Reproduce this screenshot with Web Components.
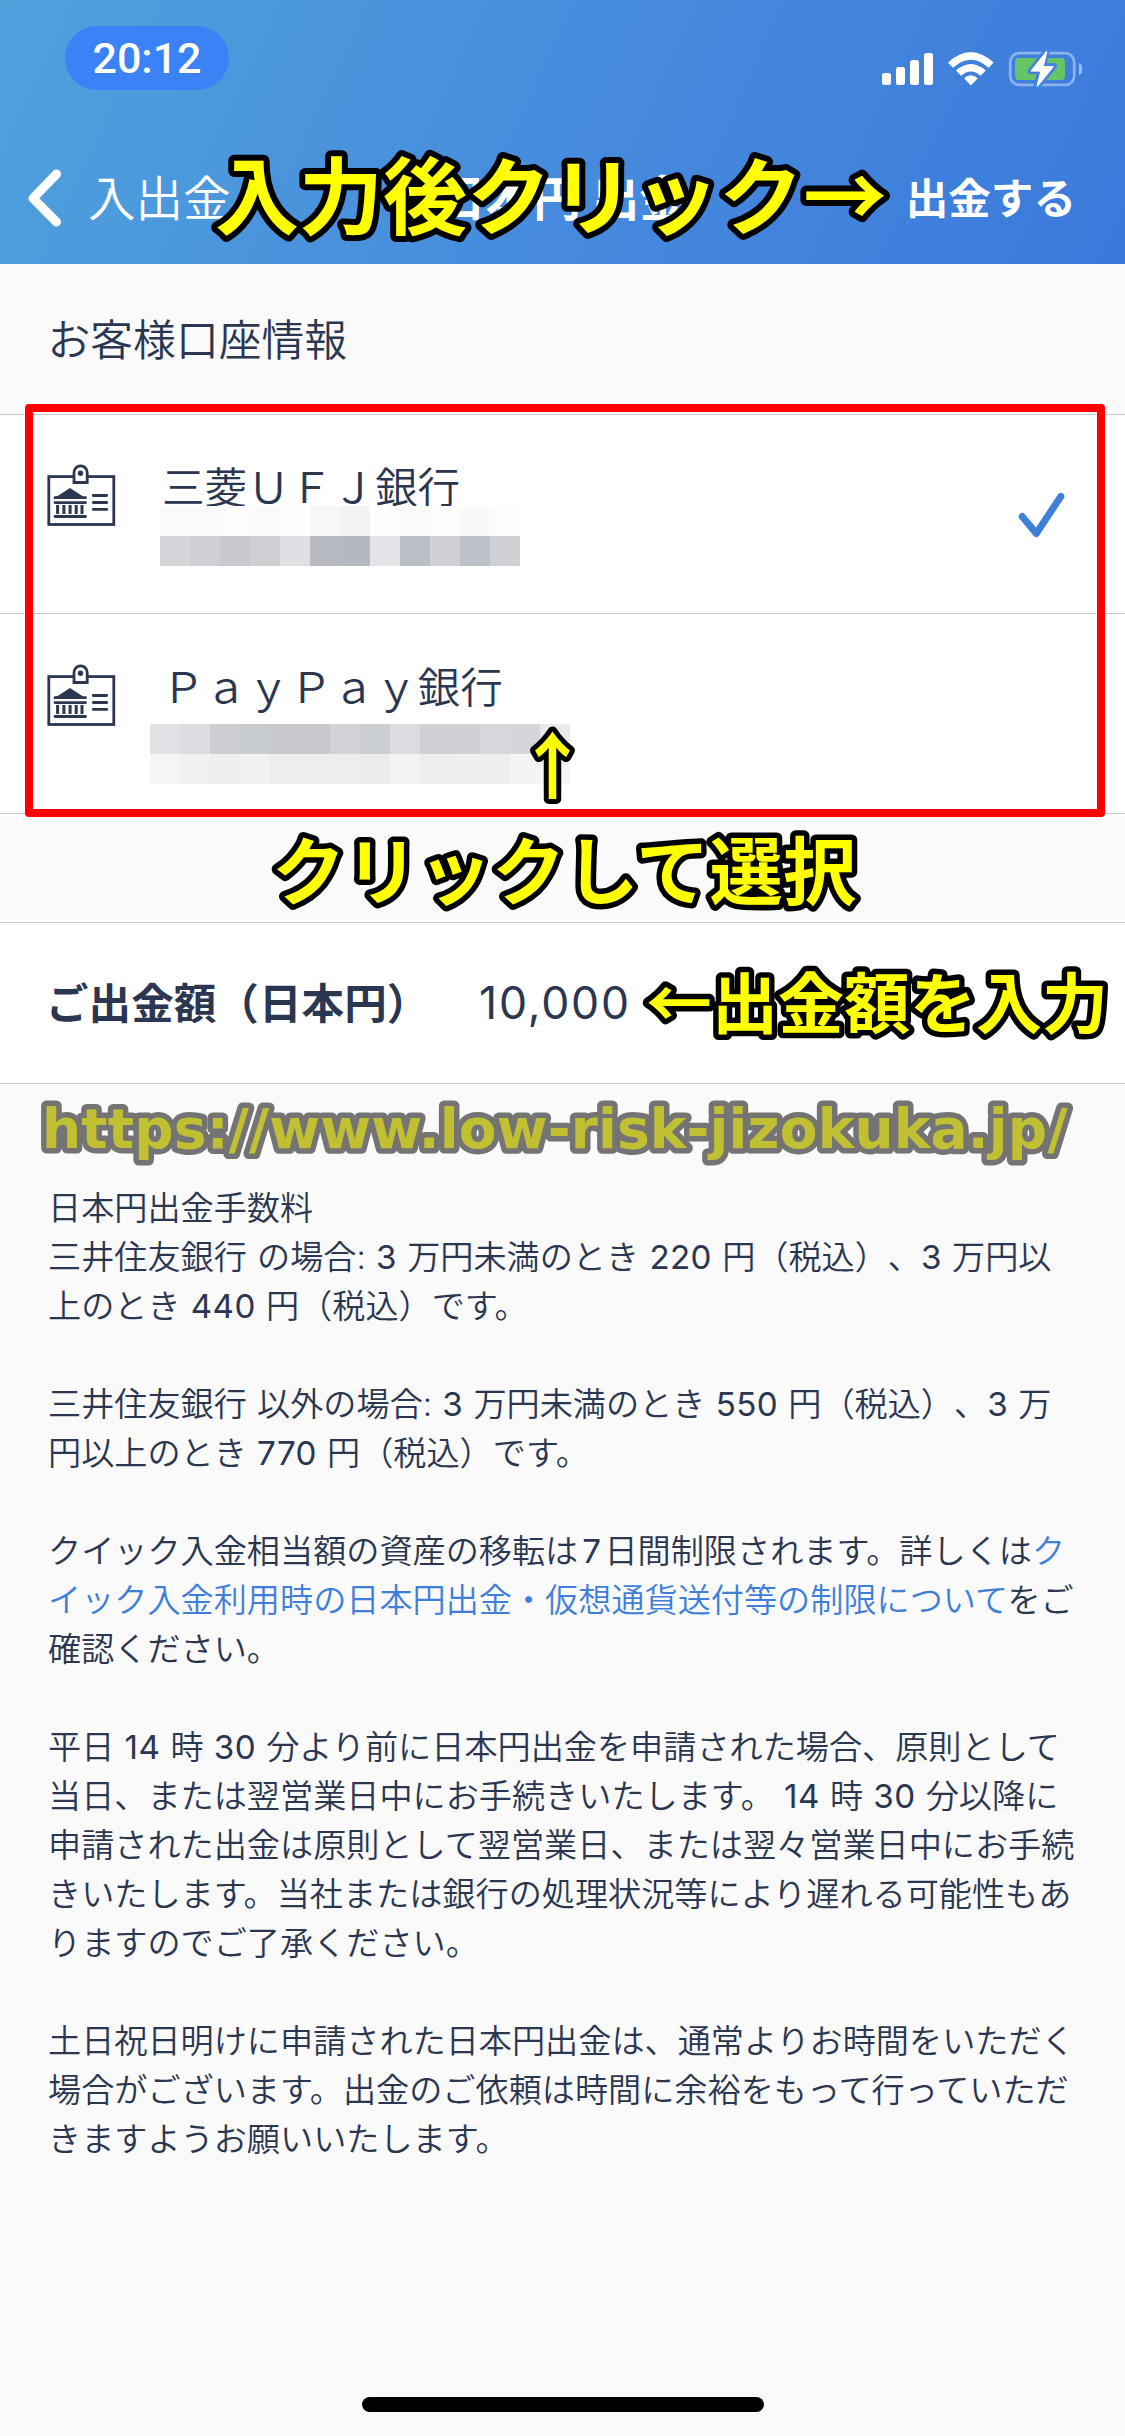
<!DOCTYPE html>
<html lang="ja">
<head>
<meta charset="utf-8">
<title>日本円 出金</title>
<style>
  html, body { margin: 0; padding: 0; }
  body { width: 1125px; height: 2436px; overflow: hidden; background: #fafafa; }
</style>
</head>
<body>
<withdraw-screen></withdraw-screen>
<script>
const define = (name, html) => {
  const t = document.createElement('template');
  t.innerHTML = html;
  customElements.define(name, class extends HTMLElement {
    constructor() {
      super();
      this.attachShadow({ mode: 'open' }).appendChild(t.content.cloneNode(true));
    }
  });
};

// Two-row strip of coloured cells that hides an account number
customElements.define('pixel-mask', class extends HTMLElement {
  connectedCallback() {
    const rows = this.getAttribute('rows').split('|').map(r => r.trim().split(/\s+/));
    const root = this.attachShadow({ mode: 'open' });
    root.innerHTML = `<style>:host{display:grid;grid-template-columns:repeat(${rows[0].length},30px);grid-auto-rows:30px}</style>` +
      rows.flat().map(c => `<i style="background:#${c}"></i>`).join('');
  }
});

// Outlined annotation text with rounded outline corners
customElements.define('callout-text', class extends HTMLElement {
  connectedCallback() {
    const root = this.attachShadow({ mode: 'open' });
    root.innerHTML = `<style>
      :host { display: block; position: absolute; height: 1em; line-height: 1; font-weight: 700; }
      svg { display: block; overflow: visible; width: 1px; height: 1em; }
      text { fill: var(--fill, #ff0); stroke: var(--edge, #000); stroke-width: var(--edge-width, 11px); stroke-linejoin: round; paint-order: stroke fill; white-space: pre; }
    </style><svg><text x="0" y="0.88em"></text></svg>`;
    root.querySelector('text').textContent = this.getAttribute('label');
  }
});

define('status-bar', `
<style>
  :host { display: flex; justify-content: space-between; height: 132px; box-sizing: border-box; padding: 26px 43px 0 65px; }
  .time { width: 164px; height: 64px; border-radius: 32px; background: #3b82f6; color: #fff;
    display: flex; align-items: center; justify-content: center; font: 500 43px/64px Roboto, sans-serif; }
  svg { display: block; margin-top: 22px; }
</style>
<div class="time">20:12</div>
<svg width="202" height="44" viewBox="880 48 202 44">
  <g fill="#fff">
    <rect x="882" y="73" width="9" height="12" rx="2.5"/><rect x="896" y="67" width="9" height="18" rx="2.5"/>
    <rect x="910" y="60" width="9" height="25" rx="2.5"/><rect x="924" y="53" width="9" height="32" rx="2.5"/>
    <path d="M948 62.5Q970.8 41.5 993.6 62.5L988.6 67.8Q970.8 51.5 953 67.8Z"/>
    <path d="M956 70.5Q970.8 57.5 985.8 70.5L980.6 75.8Q970.8 67 961 75.8Z"/>
    <path d="M964 78.3Q970.8 72.2 977.8 78.3L970.8 85.5Z"/>
  </g>
  <path d="M1079 63q3.6 1.5 3.6 6t-3.6 6z" fill="#9dbdee"/>
  <rect x="1010.2" y="53.2" width="64" height="31.6" rx="9" fill="none" stroke="#8bb2ec" stroke-width="2.8"/>
  <rect x="1015" y="58" width="50" height="22" rx="4" fill="#65c466"/>
  <path d="M1046.5 51L1030.6 71.3H1040.5L1036.5 87L1054 66.3H1043.5Z" fill="#fff" stroke="#4483dd" stroke-width="6" stroke-linejoin="round" paint-order="stroke"/>
  <path d="M1046.5 52.2L1031.8 70.6H1041.3L1037.5 85.6L1052.6 67H1042.8Z" fill="#fff" stroke="#fff" stroke-width="1.6" stroke-linejoin="round"/>
</svg>`);

define('nav-bar', `
<style>
  :host { display: grid; grid-template-columns: 1fr auto 1fr; align-items: center; height: 132px; color: #fff; white-space: nowrap; }
  .back { display: flex; align-items: center; gap: 25px; padding-left: 27px; font-size: 47.5px; font-weight: 350; line-height: 60px; }
  .back span { padding-bottom: 4px; }
  .title { font-size: 47.5px; font-weight: 600; line-height: 60px; padding-bottom: 4px; }
  .act { justify-self: end; padding: 0 49px 4px 0; font-size: 42.6px; font-weight: 600; line-height: 60px; }
  svg { display: block; }
</style>
<div class="back"><svg width="36" height="60" viewBox="0 0 36 60"><path d="M29.5 6L6 30.3L29.5 54" fill="none" stroke="#fff" stroke-width="9" stroke-linecap="round" stroke-linejoin="round"/></svg><span><slot name="back"></slot></span></div>
<div class="title"><slot></slot></div>
<div class="act"><slot name="action"></slot></div>`);

define('bank-icon', `
<style>:host { display: block; width: 72px; height: 66px; } svg { display: block; }</style>
<svg width="72" height="66" viewBox="45 462 72 66" fill="none" stroke="#2b3650" stroke-width="2.8">
  <rect x="48.8" y="476.6" width="65" height="47.9"/>
  <path d="M74 482.5V472.4a6.6 6.6 0 0 1 13.2 0V482.5Z" fill="#fff"/>
  <circle cx="80.5" cy="473.2" r="2.7" fill="#2b3650" stroke="none"/>
  <path d="M53 499L70 488L87 499Z" fill="#2b3650" stroke="none"/>
  <path d="M55 497.6H85.5M55 502.6H85.5M55 516.5H85.5" stroke-width="2.8" stroke-linecap="round"/>
  <path d="M57.6 505V514M63.9 505V514M70.1 505V514M76.2 505V514M82 505V514" stroke-width="3"/>
  <path d="M93.3 495.5H106.7M93.3 502.5H106.7M93.3 509.4H106.7" stroke-linecap="round" stroke-width="2.8"/>
</svg>`);

define('bank-row', `
<style>
  :host { display: flex; align-items: flex-start; box-sizing: border-box; height: 199px; padding: 47px 58px 0 45px; background: #fff; border-bottom: 1px solid #c8c7cc; }
  :host(:nth-of-type(2)) { height: 200px; padding-top: 48px; }
  .info { flex: 1; padding-left: 45px; }
  .name { height: 45px; font-size: 42.6px; line-height: 45px; font-weight: 350; }
  slot[name=mark]::slotted(*) { margin-top: 28px; }
</style>
<bank-icon></bank-icon>
<div class="info"><div class="name"><slot></slot></div><slot name="mask"></slot></div>
<slot name="mark"></slot>`);

define('check-mark', `
<style>:host { display: block; } svg { display: block; }</style>
<svg width="50" height="50" viewBox="1017 490 50 50"><path d="M1022.2 516.5L1036.3 533.5L1060.8 496.5" fill="none" stroke="#3f7fd9" stroke-width="7" stroke-linecap="round" stroke-linejoin="round"/></svg>`);

define('section-title', `
<style>:host { display: flex; align-items: center; box-sizing: border-box; height: 151px; padding: 0 0 4px 47.5px; font-size: 42.8px; font-weight: 350; border-bottom: 1px solid #c8c7cc; }</style>
<slot></slot>`);

define('amount-row', `
<style>
  :host { display: flex; align-items: center; box-sizing: border-box; height: 162px; margin-top: 108px; padding-left: 46px; background: #fff; border: solid #c8c7cc; border-width: 1px 0; white-space: nowrap; }
  .label { width: 433px; padding-bottom: 4px; font-size: 42.6px; font-weight: 700; line-height: 60px; text-spacing-trim: space-all; }
  .value { font: 400 44.5px/60px Inter, sans-serif; letter-spacing: 1.8px; padding-bottom: 1px; }
</style>
<div class="label"><slot></slot></div><div class="value"><slot name="value"></slot></div>`);

define('fee-notes', `
<style>
  :host { display: block; padding: 100px 0 0 48px; font-family: Inter, "Noto Sans CJK JP", sans-serif; font-size: 33.15px; line-height: 49px; font-weight: 350; white-space: nowrap; text-spacing-trim: space-all; word-spacing: .9px; }
  p { margin: 0 0 49px; }
  b { font-weight: 400; letter-spacing: .4px; }
  b.day { margin: 0 3px 0 4px; }
  a { color: #3f7fd9; }
</style>
<p>日本円出金手数料<br>三井住友銀行 の場合: <b>3</b> 万円未満のとき <b>220</b> 円（税込）、<b>3</b> 万円以<br>上のとき <b>440</b> 円（税込）です。</p>
<p>三井住友銀行 以外の場合: <b>3</b> 万円未満のとき <b>550</b> 円（税込）、<b>3</b> 万<br>円以上のとき <b>770</b> 円（税込）です。</p>
<p>クイック入金相当額の資産の移転は<b class="day">7</b>日間制限されます。詳しくは<a>ク<br>イック入金利用時の日本円出金・仮想通貨送付等の制限について</a>をご<br>確認ください。</p>
<p>平日 <b>14</b> 時 <b>30</b> 分より前に日本円出金を申請された場合、原則として<br>当日、または翌営業日中にお手続きいたします。 <b>14</b> 時 <b>30</b> 分以降に<br>申請された出金は原則として翌営業日、または翌々営業日中にお手続<br>きいたします。当社または銀行の処理状況等により遅れる可能性もあ<br>りますのでご了承ください。</p>
<p>土日祝日明けに申請された日本円出金は、通常よりお時間をいただく<br>場合がございます。出金のご依頼は時間に余裕をもって行っていただ<br>きますようお願いいたします。</p>`);

define('withdraw-screen', `
<style>
  :host { display: flex; flex-direction: column; position: relative; width: 1125px; height: 2436px; overflow: hidden; background: #fafafa; color: #2b3650; font-family: "Noto Sans CJK JP", sans-serif; }
  header { background: linear-gradient(115deg, #50a1dc 0%, #468bdd 52%, #3b79dc 100%); height: 264px; }
  .frame { position: absolute; left: 24.5px; top: 404px; width: 1080px; height: 412.5px; box-sizing: border-box; border: 8px solid #f00; border-radius: 4px; }
  .c1 { left: 215px; top: 154px; font-size: 84px; --edge-width: 12px; }
  .c2 { left: 272px; top: 834px; font-size: 73.3px; }
  .c3 { left: 646px; top: 970px; font-size: 66px; }
  .c4 { left: 516px; top: 729px; font-size: 73px; --edge-width: 10px; }
  .url { left: 41.5px; top: 1100px; font-family: "DejaVu Sans", sans-serif; font-size: 55px; letter-spacing: .16px; --fill: #c1c032; --edge: #747474; }
  .home { align-self: center; margin-top: auto; margin-bottom: 24px; width: 402px; height: 15px; border-radius: 8px; background: #000; }
</style>
<header>
  <status-bar></status-bar>
  <nav-bar><span slot="back">入出金</span>日本円 出金<span slot="action">出金する</span></nav-bar>
</header>
<section-title>お客様口座情報</section-title>
<bank-row>三菱ＵＦＪ銀行
  <pixel-mask slot="mask" style="margin-left:-2px;margin-top:-1px" rows="fafafb fafafb fcfcfd fafafb fdfefe f6f7f7 f3f3f4 fdfdfd fafafa fcfcfd f8faf9 fcfcfc|d5d6da cfd0d5 c8c9ce cdcfd3 dfe0e4 b7bac3 b4b8c1 e3e4e8 babec7 cfd0d5 bcc0c9 d0d1d6"></pixel-mask>
  <check-mark slot="mark"></check-mark>
</bank-row>
<bank-row>ＰａｙＰａｙ銀行
  <pixel-mask slot="mask" style="margin-left:-12px;margin-top:17px" rows="e1e2e6 dcdde1 cdced2 c8cbd0 c7c9ce c8c9ce d2d3d7 cbced3 dbdce0 cfd0d4 d0d1d5 d6d7db d4d6da e9eaec|f5f5f6 f0f1f3 edeef0 eff1f3 ebedee ecedef ecedef ebecee f1f3f4 edeef0 edeff0 edeef0 f3f4f4 f4f4f4"></pixel-mask>
</bank-row>
<amount-row>ご出金額（日本円）<span slot="value">10,000</span></amount-row>
<fee-notes></fee-notes>
<div class="home"></div>
<div class="frame"></div>
<callout-text class="c1" label="入力後クリック→"></callout-text>
<callout-text class="c4" label="↑"></callout-text>
<callout-text class="c2" label="クリックして選択"></callout-text>
<callout-text class="c3" label="←出金額を入力"></callout-text>
<callout-text class="url" label="https://www.low-risk-jizokuka.jp/"></callout-text>`);
</script>
</body>
</html>
